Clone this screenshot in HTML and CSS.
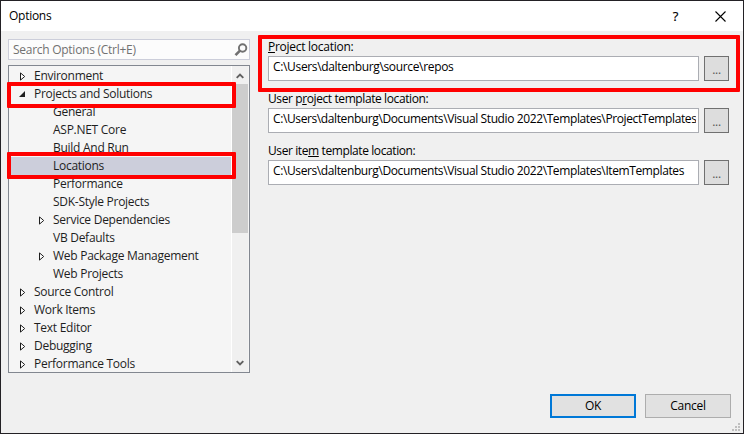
FILE: index.html
```html
<!DOCTYPE html>
<html lang="en">
<head>
<meta charset="utf-8">
<title>Options</title>
<link rel="stylesheet" href="styles.css">
</head>
<body>
<div class="window">
  <header class="titlebar">
    <h1 class="title">Options</h1>
    <span class="help">?</span>
    <svg class="close" width="11" height="11" viewBox="0 0 11 11"><path d="M.5 .5l10 10M10.5 .5l-10 10" stroke="#000" stroke-width="1.1" fill="none"/></svg>
  </header>
  <main class="body">
    <aside class="side">
      <div class="search">
        <span class="placeholder">Search Options (Ctrl+E)</span>
        <svg width="14" height="14" viewBox="0 0 14 14"><circle cx="8.6" cy="5" r="3.7" fill="none" stroke="#717171" stroke-width="1.9"/><path d="M6 7.600L1.500 12.100" stroke="#717171" stroke-width="2.6"/></svg>
      </div>
      <div class="tree">
        <ul class="rows">
          <li><svg class="arrow" viewBox="0 0 6 9"><path d="M.5 .9v7.2l4.2-3.6z"/></svg><span>Environment</span></li>
          <li><svg class="arrow open" viewBox="0 0 6 6"><path d="M6 0v6H0z"/></svg><span>Projects and Solutions</span></li>
          <li class="child"><span>General</span></li>
          <li class="child"><span>ASP.NET Core</span></li>
          <li class="child"><span>Build And Run</span></li>
          <li class="child selected"><span>Locations</span></li>
          <li class="child"><span>Performance</span></li>
          <li class="child"><span>SDK-Style Projects</span></li>
          <li class="child"><svg class="arrow" viewBox="0 0 6 9"><path d="M.5 .9v7.2l4.2-3.6z"/></svg><span>Service Dependencies</span></li>
          <li class="child"><span>VB Defaults</span></li>
          <li class="child"><svg class="arrow" viewBox="0 0 6 9"><path d="M.5 .9v7.2l4.2-3.6z"/></svg><span>Web Package Management</span></li>
          <li class="child"><span>Web Projects</span></li>
          <li><svg class="arrow" viewBox="0 0 6 9"><path d="M.5 .9v7.2l4.2-3.6z"/></svg><span>Source Control</span></li>
          <li><svg class="arrow" viewBox="0 0 6 9"><path d="M.5 .9v7.2l4.2-3.6z"/></svg><span>Work Items</span></li>
          <li><svg class="arrow" viewBox="0 0 6 9"><path d="M.5 .9v7.2l4.2-3.6z"/></svg><span>Text Editor</span></li>
          <li><svg class="arrow" viewBox="0 0 6 9"><path d="M.5 .9v7.2l4.2-3.6z"/></svg><span>Debugging</span></li>
          <li><svg class="arrow" viewBox="0 0 6 9"><path d="M.5 .9v7.2l4.2-3.6z"/></svg><span>Performance Tools</span></li>
        </ul>
        <div class="scrollbar">
          <svg class="chev" width="8" height="6" viewBox="0 0 8 6"><path d="M.7 4.8L4 1.5l3.300 3.300"/></svg>
          <div class="thumb"></div>
          <svg class="chev down" width="8" height="6" viewBox="0 0 8 6"><path d="M.7 1.200L4 4.500l3.300-3.300"/></svg>
        </div>
      </div>
    </aside>
    <section class="page">
      <div class="field">
        <label><u>P</u>roject location:</label>
        <div class="line"><div class="input"><span>C:\Users\daltenburg\source\repos</span></div><button class="browse">...</button></div>
      </div>
      <div class="field">
        <label class="tight">User p<u>r</u>oject template location:</label>
        <div class="line"><div class="input"><span class="long">C:\Users\daltenburg\Documents\Visual Studio 2022\Templates\ProjectTemplates</span></div><button class="browse">...</button></div>
      </div>
      <div class="field">
        <label class="tight">User ite<u>m</u> template location:</label>
        <div class="line"><div class="input"><span class="long">C:\Users\daltenburg\Documents\Visual Studio 2022\Templates\ItemTemplates</span></div><button class="browse">...</button></div>
      </div>
    </section>
  </main>
  <footer class="actions">
    <button class="btn primary">OK</button>
    <button class="btn">Cancel</button>
  </footer>
  <svg class="grip" width="8" height="8" viewBox="0 0 8 8"><path d="M6 0h2v2H6zM3 3h2v2H3zM6 3h2v2H6zM0 6h2v2H0zM3 6h2v2H3zM6 6h2v2H6z" fill="#bfbfbf"/></svg>
  <div class="mark mark-projects"></div>
  <div class="mark mark-locations"></div>
  <div class="mark mark-field"></div>
</div>
</body>
</html>
```

FILE: styles.css
```css
* { box-sizing: border-box; }
body { margin: 0; font: 12px/18px "Open Sans", "Noto Sans", sans-serif; letter-spacing: -.27px; color: #1e1e1e; }
button { font: inherit; letter-spacing: inherit; color: #000; padding: 0; margin: 0; border-radius: 0; }
.window { position: relative; width: 744px; height: 434px; border: 1px solid #232125; background: #f0f0f0; display: flex; flex-direction: column; overflow: hidden; }
.titlebar { height: 30px; background: #fff; display: flex; align-items: center; padding: 0 17px 0 8px; color: #000; }
.title { margin: 0; font-size: 12px; font-weight: 400; flex: 1; }
.help { font-size: 13px; font-weight: 500; -webkit-text-stroke: .2px #000; margin-right: 37px; }
.body { display: flex; padding: 8px 14px 0 7px; gap: 18px; height: 342px; }
.side { width: 242px; display: flex; flex-direction: column; gap: 5px; }
.search { height: 21px; border: 1px solid #ccceda; background: #fcfcfc; display: flex; align-items: center; justify-content: space-between; padding: 0 1px 0 4px; color: #717171; }
.tree { height: 308px; border: 1px solid #828790; background: #f5f5f5; display: flex; padding: 1px; overflow: hidden; }
.rows { list-style: none; margin: 0; padding: 0; flex: 1; }
.rows li { height: 18px; padding-left: 24px; display: flex; align-items: center; position: relative; white-space: nowrap; }
.rows .child { padding-left: 43px; }
.selected { background: #cccedb; }
.arrow { position: absolute; left: 10px; top: 5px; width: 6px; height: 9px; fill: #fff; stroke: #1e1e1e; stroke-width: 1; }
.child .arrow { left: 29px; }
.arrow.open { left: 9px; top: 6px; width: 6px; height: 6px; fill: #1e1e1e; stroke: none; }
.scrollbar { width: 17px; background: #f0f0f0; border-left: 1px solid #fff; display: flex; flex-direction: column; align-items: center; margin: -1px 0; }
.chev { margin: 7px 0 5px; fill: none; stroke: #606060; stroke-width: 1.9; flex: none; }
.thumb { align-self: stretch; height: 149px; background: #cdcdcd; }
.chev.down { margin: auto 0 6px; }
.page { flex: 1; color: #000; }
.field { height: 52px; }
.field label { display: block; height: 17px; line-height: 15px; white-space: nowrap; }
.field .tight { letter-spacing: -.4px; }
.line { display: flex; gap: 5px; }
.input { width: 431px; height: 25px; border: 1px solid #abadb3; background: #fff; padding: 0 2px 0 4px; line-height: 20px; display: flex; letter-spacing: -.34px; }
.input span { flex: 1; min-width: 0; overflow: hidden; white-space: nowrap; }
.input .long { letter-spacing: -.39px; }
.browse { width: 25px; height: 25px; border: 1px solid #707070; background: #ddd; color: #555; line-height: 25px; }
.actions { display: flex; gap: 9px; justify-content: flex-end; padding: 21px 12px 0 0; }
.btn { width: 86px; height: 24px; border: 1px solid #adadad; background: #e1e1e1; }
.btn.primary { border: 2px solid #0078d7; }
.grip { position: absolute; right: 3px; bottom: 2px; }
.mark { position: absolute; border: 4px solid #f00; border-radius: 1px; }
.mark-projects { left: 6px; top: 81px; width: 229px; height: 26px; }
.mark-locations { left: 6px; top: 151px; width: 229px; height: 27px; }
.mark-field { left: 257px; top: 34px; width: 482px; height: 57px; }
```
